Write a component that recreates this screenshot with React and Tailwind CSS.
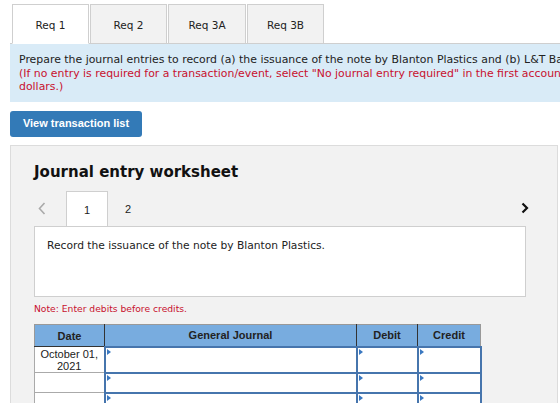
import React from 'react'

const tabs = ['Req 1', 'Req 2', 'Req 3A', 'Req 3B']

const InputCell = ({ className = '' }) => (
  <td className={`relative border-2 border-[#4675ad] bg-white p-0 ${className}`}>
    <span className="absolute left-[1px] top-[1px] h-0 w-0 border-y-[3px] border-l-[4px] border-y-transparent border-l-[#3a78c0]" />
  </td>
)

const Row = ({ date, h }) => (
  <tr className={h}>
    <td className="border border-[#aaa] bg-white px-1 text-center text-[11px] leading-[12px] text-[#222]">{date}</td>
    <InputCell />
    <InputCell />
    <InputCell />
  </tr>
)

export default function App() {
  return (
    <div className="relative h-[403px] w-[560px] overflow-hidden bg-white font-['DejaVu_Sans',sans-serif] text-[#222]">
      {/* requirement tabs */}
      <div className="relative z-10 flex gap-[1px] pl-[12px] pt-[4px]">
        {tabs.map((t, i) => (
          <div
            key={t}
            className={`flex h-[40px] items-center justify-center border border-[#cfcfcf] pt-[3px] text-[10.5px] ${
              i === 0 ? 'w-[77px] border-b-white bg-white' : i === 2 ? 'w-[78px] bg-[#f2f2f2]' : 'w-[77px] bg-[#f2f2f2]'
            }`}
          >
            {t}
          </div>
        ))}
      </div>

      {/* instructions */}
      <div className="-mt-px ml-[10px] overflow-hidden border-t border-[#cfcfcf] bg-[#d9ebf7] pb-[8px] pl-[9px] pt-[9px] text-[10.9px] leading-[13.5px] whitespace-nowrap">
        <p>Prepare the journal entries to record (a) the issuance of the note by Blanton Plastics and (b) L&amp;T Bank.</p>
        <p className="text-[#c8102e]">
          (If no entry is required for a transaction/event, select "No journal entry required" in the first account field.)
        </p>
        <p className="text-[#c8102e]">dollars.)</p>
      </div>

      <button className="ml-[10px] mt-[9px] flex h-[26px] w-[132px] items-center justify-center rounded-[3px] bg-[#337ab7] font-['Liberation_Sans',sans-serif] text-[11px] font-bold text-white">
        View transaction list
      </button>

      {/* worksheet */}
      <div className="ml-[10px] mt-[8px] h-[300px] w-[548px] border border-[#dcdcdc] bg-[#f2f2f2] pl-[23px] pt-[16px]">
        <h2 className="text-[15px] font-bold leading-[20px] text-[#111]">Journal entry worksheet</h2>

        <div className="mt-[9px] flex h-[35px] items-center">
          <svg className="ml-[4px] mr-[20px]" width="8" height="13" viewBox="0 0 8 13">
            <path d="M6.5 1 1.5 6.5 6.5 12" fill="none" stroke="#aaa" strokeWidth="1.6" />
          </svg>
          <div className="relative z-10 -mb-px flex h-[35px] w-[42px] items-center justify-center border border-b-0 border-[#cfcfcf] bg-white pt-[2px] font-['Liberation_Sans',sans-serif] text-[11px]">
            1
          </div>
          <span className="ml-[17px] pt-[2px] font-['Liberation_Sans',sans-serif] text-[11px]">2</span>
          <svg className="ml-auto mr-[28px]" width="8" height="12" viewBox="0 0 8 12">
            <path d="M1.5 1.5 6 6 1.5 10.5" fill="none" stroke="#111" strokeWidth="2.2" />
          </svg>
        </div>

        <div className="h-[71px] w-[492px] border border-[#cfcfcf] bg-white pl-[12px] pt-[11px] text-[10.7px]">
          Record the issuance of the note by Blanton Plastics.
        </div>

        <p className="mt-[5px] text-[9.2px] text-[#c8102e]">Note: Enter debits before credits.</p>

        <table className="mt-[9px] w-[446px] table-fixed border-collapse font-['Liberation_Sans',sans-serif]">
          <colgroup>
            <col className="w-[70px]" />
            <col className="w-[252px]" />
            <col className="w-[61px]" />
            <col className="w-[63px]" />
          </colgroup>
          <thead>
            <tr className="h-[22px] bg-[#78acdf] text-[11px] font-bold text-[#222]">
              <th className="border border-[#333] border-t-[#999] border-l-[#999]">Date</th>
              <th className="border border-[#333] border-t-[#999]">General Journal</th>
              <th className="border border-[#333] border-t-[#999]">Debit</th>
              <th className="border border-[#333] border-t-[#999] border-r-[#999]">Credit</th>
            </tr>
          </thead>
          <tbody>
            <Row date={<>October 01,<br />2021</>} h="h-[26px]" />
            <Row h="h-[20px]" />
            <Row h="h-[20px]" />
          </tbody>
        </table>
      </div>
    </div>
  )
}
